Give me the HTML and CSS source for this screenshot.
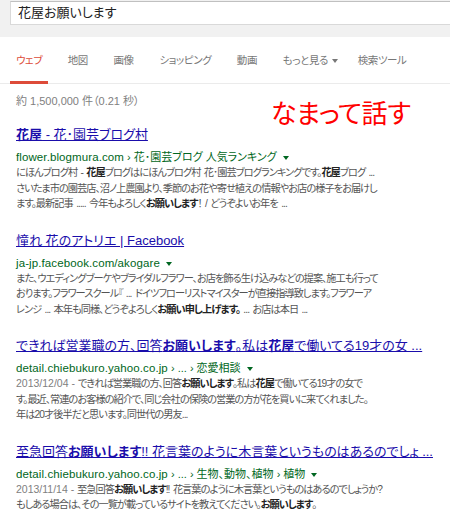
FILE: index.html
```html
<!DOCTYPE html>
<html lang="ja">
<head>
<meta charset="utf-8">
<title>花屋お願いします</title>
<link rel="stylesheet" href="styles.css">
</head>
<body>
<div class="page">
  <div class="header">
    <div class="searchbox">花屋お願いします</div>
  </div>
  <div class="nav">
    <span class="tab active">ウェブ</span>
    <span class="tab">地図</span>
    <span class="tab">画像</span>
    <span class="tab">ショッピング</span>
    <span class="tab">動画</span>
    <span class="tab more">もっと見る<span class="caret gray"></span></span>
    <span class="tab">検索ツール</span>
  </div>
  <div class="count">約 1,500,000 件（0.21 秒）</div>

  <div class="results">
    <div class="result">
      <div class="title"><a><b>花屋</b> - 花･園芸ブログ村</a></div>
      <div class="url"><span class="host">flower.blogmura.com</span> › 花･園芸ブログ 人気ランキング<span class="caret"></span></div>
      <div class="snip">にほんブログ村 - <b>花屋</b>ブログはにほんブログ村 花･園芸ブログランキングです。<b>花屋</b>ブログ ...<br>さいたま市の園芸店、沼ノ上農園より、季節のお花や寄せ植えの情報やお店の様子をお届けし<br>ます。最新記事 ..... 今年もよろしく<b>お願いします</b>！ / どうぞよいお年を ...</div>
    </div>

    <div class="result">
      <div class="title"><a>憧れ 花のアトリエ | Facebook</a></div>
      <div class="url"><span class="host">ja-jp.facebook.com/akogare</span><span class="caret"></span></div>
      <div class="snip">また、ウエディングブーケやブライダルフラワー、お店を飾る生け込みなどの提案、施工も行って<br>おります。フラワースクール『 ... ドイツフローリストマイスターが直接指導致します。フラワーア<br>レンジ ... 本年も同様、どうぞよろしく<b>お願い申し上げます。</b> ... お店は本日 ...</div>
    </div>

    <div class="result">
      <div class="title"><a>できれば営業職の方、回答<b>お願いします</b>。私は<b>花屋</b>で働いてる19才の女 ...</a></div>
      <div class="url"><span class="host">detail.chiebukuro.yahoo.co.jp</span> › ... › 恋愛相談<span class="caret"></span></div>
      <div class="snip"><span class="date">2013/12/04 - </span>できれば営業職の方、回答<b>お願いします</b>。私は<b>花屋</b>で働いてる19才の女で<br>す。最近、常連のお客様の紹介で、同じ会社の保険の営業の方が花を買いに来てくれました。<br>年は20才後半だと思います。同世代の男友...</div>
    </div>

    <div class="result">
      <div class="title"><a>至急回答<b>お願いします</b>!! 花言葉のように木言葉というものはあるのでしょ ...</a></div>
      <div class="url"><span class="host">detail.chiebukuro.yahoo.co.jp</span> › ... › 生物、動物、植物 › 植物<span class="caret"></span></div>
      <div class="snip"><span class="date">2013/11/14 - </span>至急回答<b>お願いします</b>!! 花言葉のように木言葉というものはあるのでしょうか?<br>もしある場合は、その一覧が載っているサイトを教えてください。<b>お願いします</b>。</div>
    </div>
  </div>

  <div class="note">なまって話す</div>
</div>
</body>
</html>
```

FILE: styles.css
```css
html, body {
  margin: 0;
  padding: 0;
  background: #fff;
}

.page {
  position: relative;
  width: 450px;
  height: 516px;
  overflow: hidden;
  font-family: "Liberation Sans", "Noto Sans CJK JP", sans-serif;
  font-feature-settings: "palt";
}

.header {
  background: #f1f1f1;
  height: 37px;
  box-sizing: border-box;
  padding: 1px 0 0 10px;
}

.searchbox {
  width: 470px;
  height: 24px;
  box-sizing: border-box;
  background: #fff;
  border: 1px solid #d9d9d9;
  border-top-color: #c0c0c0;
  padding-left: 7px;
  font-size: 13px;
  line-height: 22px;
  color: #222;
}

.nav {
  display: flex;
  gap: 13.6px;
  height: 47px;
  box-sizing: border-box;
  padding-left: 10px;
  border-bottom: 1px solid #ebebeb;
}

.tab {
  display: flex;
  align-items: flex-start;
  padding: 15px 6px 0;
  font-size: 10.5px;
  letter-spacing: -0.4px;
  line-height: 16px;
  color: #777;
  box-sizing: border-box;
  height: 47px;
  white-space: nowrap;
}

.tab.more {
  padding-right: 0;
}

.tab.active {
  color: #dd4b39;
  border-bottom: 3px solid #dd4b39;
}

.caret {
  display: inline-block;
  width: 0;
  height: 0;
  border-left: 3px solid transparent;
  border-right: 3px solid transparent;
  border-top: 4px solid #006621;
  margin-left: 6px;
  vertical-align: middle;
}

.tab .caret.gray {
  border-top-color: #777;
  margin-top: 7px;
  margin-left: 4px;
  align-self: flex-start;
}

.count {
  margin: 9px 0 16px 16px;
  font-size: 11px;
  line-height: 16px;
  color: #808080;
}

.results {
  padding-left: 16px;
}

.result {
  margin-bottom: 19px;
}

.title {
  font-size: 13px;
  line-height: 20px;
  margin-bottom: 5px;
  white-space: nowrap;
}

.title a {
  color: #1a0dab;
  text-decoration: underline;
}

.url {
  font-size: 11px;
  line-height: 15px;
  color: #006621;
  white-space: nowrap;
}

.url .host {
  font-size: 11.5px;
  letter-spacing: 0.1px;
}

.snip {
  font-size: 10.2px;
  letter-spacing: -0.95px;
  word-spacing: 1.5px;
  line-height: 15.5px;
  color: #545454;
  white-space: nowrap;
}

.snip b {
  color: #222;
}

.date {
  color: #808080;
  font-size: 10.5px;
  letter-spacing: 0;
  word-spacing: 0;
}

.note {
  position: absolute;
  left: 271px;
  top: 97px;
  font-family: "Noto Sans CJK JP", sans-serif;
  font-size: 26px;
  line-height: 30px;
  letter-spacing: -0.3px;
  color: #f00;
}
```
